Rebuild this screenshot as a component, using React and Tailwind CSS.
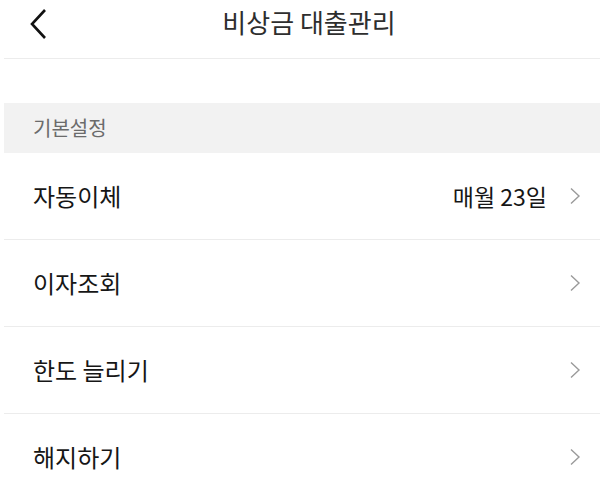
import React from "react";

const font = { fontFamily: '"Noto Sans CJK KR", "Noto Sans", sans-serif' };

const rows = [
  { label: "자동이체", value: "매월 23일" },
  { label: "이자조회" },
  { label: "한도 늘리기" },
  { label: "해지하기" },
];

const Chevron = () => (
  <svg width="12" height="18" viewBox="0 0 12 18" fill="none" className="shrink-0">
    <path d="M2 1.5 L10 9 L2 16.5" stroke="#9a9a9a" strokeWidth="1.4" />
  </svg>
);

const App = () => {
  return (
    <div className="w-[600px] h-[500px] overflow-hidden bg-white pl-1" style={font}>
      {/* Header */}
      <div className="h-[59px] border-b border-[#ececec] grid grid-cols-[1fr_auto_1fr] items-start">
        <button className="pl-[25px] pt-[8px] justify-self-start">
          <svg width="20" height="32" viewBox="0 0 20 32" fill="none">
            <path d="M16 2 L3 16 L16 30" stroke="#111" strokeWidth="2.6" />
          </svg>
        </button>
        <h1 className="pl-[14px] pt-[3px] text-[26px] leading-[38px] text-[#2e2e2e] font-normal">
          비상금 대출관리
        </h1>
        <div />
      </div>

      <div className="h-[44px]" />

      {/* Section */}
      <div className="h-[50px] bg-[#f2f2f2] flex items-center pl-[29px]">
        <span className="text-[20px] text-[#6b6b6b]">기본설정</span>
      </div>

      {rows.map((row) => (
        <div
          key={row.label}
          className="h-[87px] border-b border-[#ececec] flex items-center justify-between pl-[29px] pr-[19px]"
        >
          <span className="text-[24px] text-[#161616]">{row.label}</span>
          <div className="flex items-center gap-[22px]">
            {row.value && (
              <span className="text-[23px] text-[#161616]">{row.value}</span>
            )}
            <Chevron />
          </div>
        </div>
      ))}
    </div>
  );
};

export default App;
